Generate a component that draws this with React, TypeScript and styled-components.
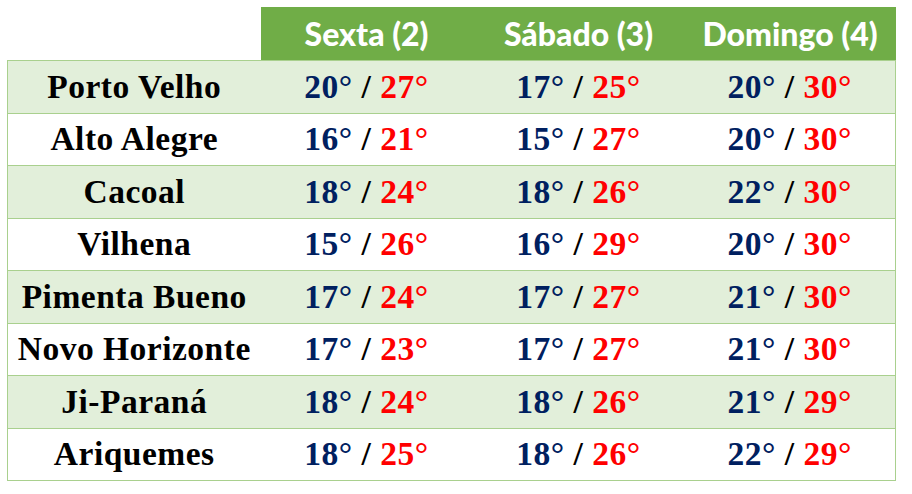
import styled, { createGlobalStyle } from "styled-components";

const GlobalStyle = createGlobalStyle`
  html, body {
    margin: 0;
    padding: 0;
    background: #ffffff;
  }
`;

const Page = styled.div`
  padding: 7px 0 0 7px;
`;

const Table = styled.table`
  border-collapse: collapse;
  table-layout: fixed;
  width: 888px;
`;

const HeadCell = styled.th<{ $blank?: boolean }>`
  height: 53px;
  padding: 0;
  line-height: 50px;
  background: ${({ $blank }) => ($blank ? "transparent" : "#70ad47")};
  color: #ffffff;
  font-family: "Lato", "Liberation Sans", sans-serif;
  font-weight: 900;
  font-size: 32px;
  text-align: center;
  vertical-align: middle;
`;

const Row = styled.tr<{ $shaded: boolean }>`
  background: ${({ $shaded }) => ($shaded ? "#e2efda" : "#ffffff")};
`;

const Cell = styled.td`
  height: 51.5px;
  padding: 0;
  line-height: 36px;
  border-top: 1px solid #a9d08e;
  border-bottom: 1px solid #a9d08e;
  font-family: "Liberation Serif", "DejaVu Serif", serif;
  font-weight: 700;
  font-size: 33.5px;
  letter-spacing: 0.5px;
  text-align: center;
  vertical-align: middle;
  color: #000000;

  &:first-child {
    border-left: 1px solid #a9d08e;
  }

  &:last-child {
    border-right: 1px solid #a9d08e;
  }
`;

const Min = styled.span`
  color: #002060;
`;

const Max = styled.span`
  color: #ff0000;
`;

const days = ["Sexta (2)", "Sábado (3)", "Domingo (4)"];

const cities: [string, [number, number][]][] = [
  ["Porto Velho", [[20, 27], [17, 25], [20, 30]]],
  ["Alto Alegre", [[16, 21], [15, 27], [20, 30]]],
  ["Cacoal", [[18, 24], [18, 26], [22, 30]]],
  ["Vilhena", [[15, 26], [16, 29], [20, 30]]],
  ["Pimenta Bueno", [[17, 24], [17, 27], [21, 30]]],
  ["Novo Horizonte", [[17, 23], [17, 27], [21, 30]]],
  ["Ji-Paraná", [[18, 24], [18, 26], [21, 29]]],
  ["Ariquemes", [[18, 25], [18, 26], [22, 29]]],
];

function App() {
  return (
    <Page>
      <GlobalStyle />
      <Table>
        <colgroup>
          <col style={{ width: 253 }} />
          <col style={{ width: 212 }} />
          <col style={{ width: 212 }} />
          <col style={{ width: 211 }} />
        </colgroup>
        <thead>
          <tr>
            <HeadCell $blank />
            {days.map((d) => (
              <HeadCell key={d}>{d}</HeadCell>
            ))}
          </tr>
        </thead>
        <tbody>
          {cities.map(([name, temps], i) => (
            <Row key={name} $shaded={i % 2 === 0}>
              <Cell>{name}</Cell>
              {temps.map(([lo, hi], j) => (
                <Cell key={j}>
                  <Min>{lo}°</Min> / <Max>{hi}°</Max>
                </Cell>
              ))}
            </Row>
          ))}
        </tbody>
      </Table>
    </Page>
  );
}

export default App;
